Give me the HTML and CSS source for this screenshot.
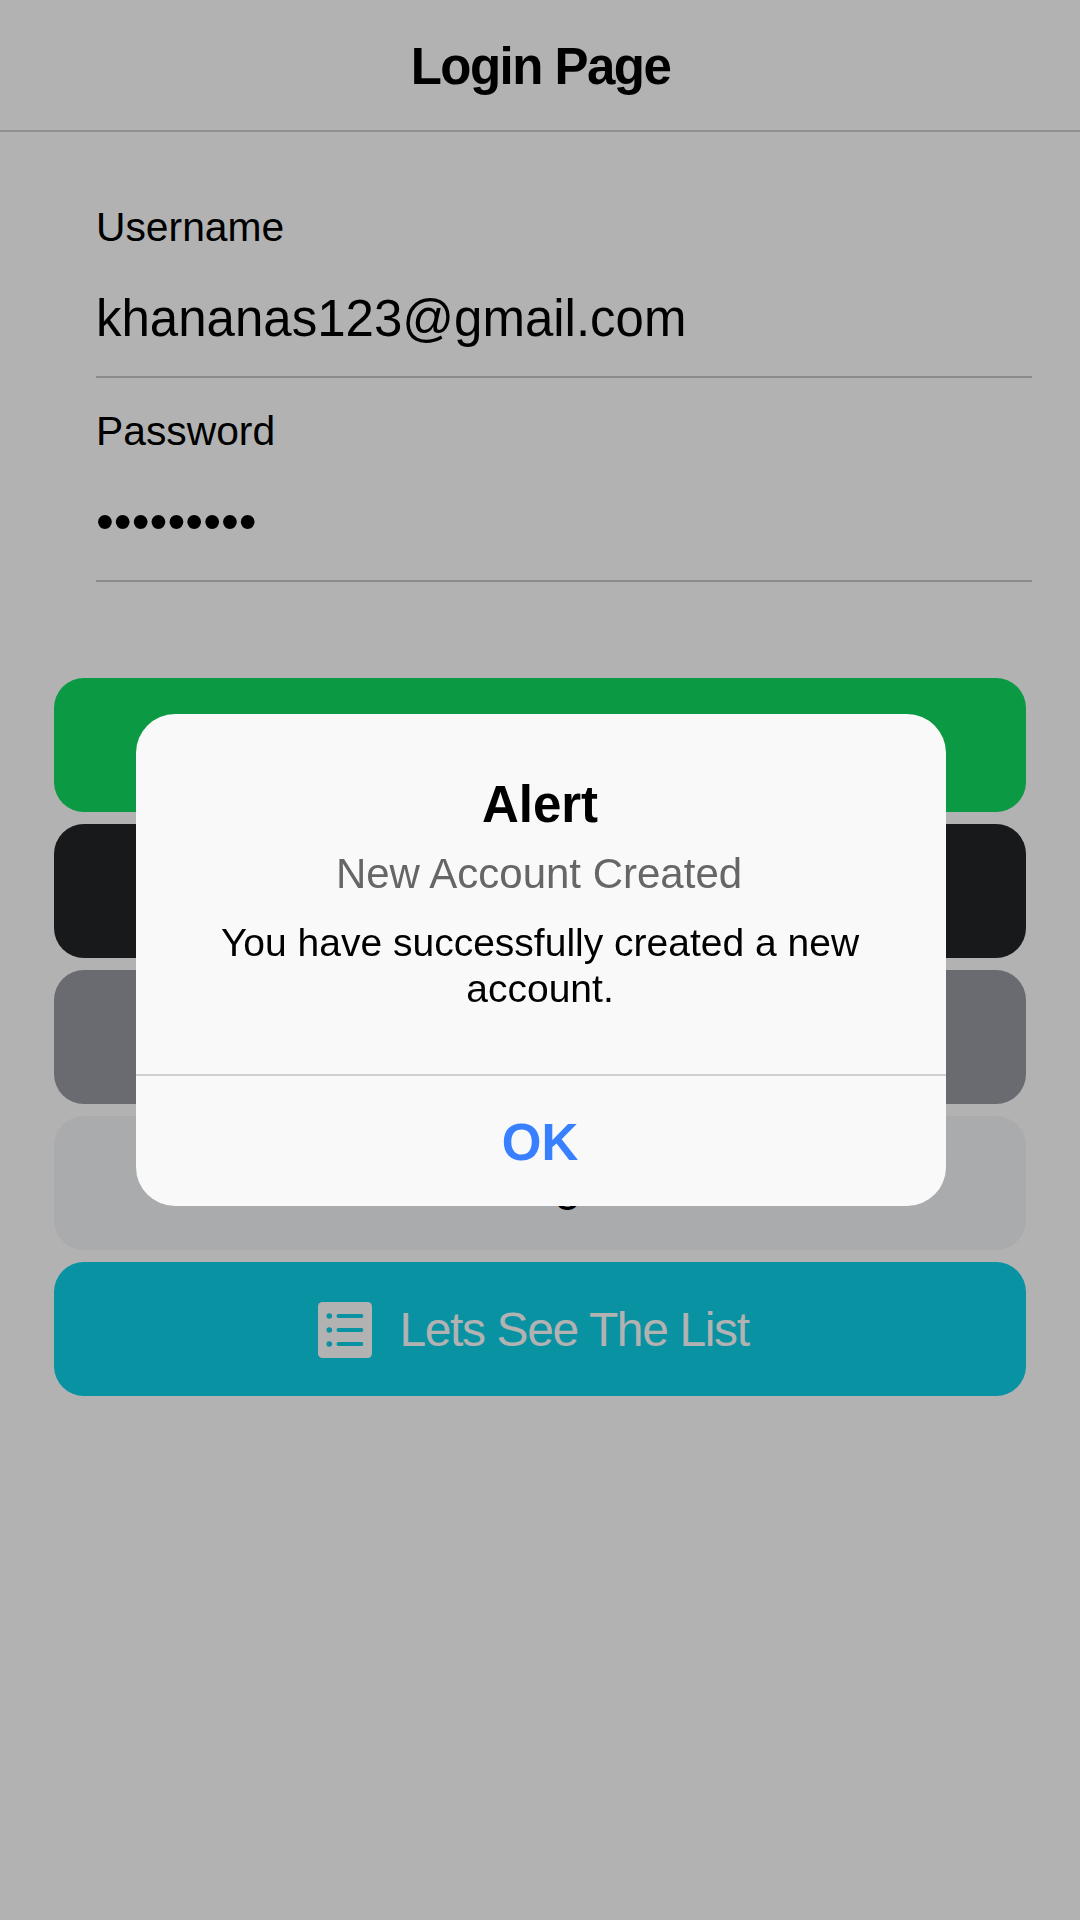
FILE: index.html
```html
<!DOCTYPE html>
<html lang="en">
<head>
<meta charset="utf-8">
<title>Login Page</title>
<link rel="stylesheet" href="styles.css">
</head>
<body>
<main class="page">
  <header class="toolbar"><h1 class="toolbar-title">Login Page</h1></header>
  <form class="fields">
    <label class="field"><span class="field-label">Username</span><input class="field-input" type="text" value="khananas123@gmail.com"></label>
    <label class="field"><span class="field-label">Password</span><input class="field-input password-input" type="password" value="password1"></label>
  </form>
  <div class="actions">
    <div class="button success"></div>
    <div class="button dark"></div>
    <div class="button medium"></div>
    <div class="button light"><span class="logout-label">Log Out</span></div>
    <div class="button secondary">
      <svg class="list-icon" viewBox="0 0 54 56" aria-hidden="true">
        <rect width="54" height="56" rx="4.5" fill="#fff"/>
        <g fill="#0cd1e8"><circle cx="11.3" cy="14" r="2.8"/><circle cx="11.3" cy="28" r="2.8"/><circle cx="11.3" cy="42" r="2.8"/></g>
        <path d="M20.4 14h23M20.4 28h23M20.4 42h23" stroke="#0cd1e8" stroke-width="3.8" stroke-linecap="round"/>
      </svg>
      <span>Lets See The List</span>
    </div>
  </div>
</main>
<div class="backdrop">
  <section class="alert" role="alertdialog">
    <div class="alert-body">
      <h2 class="alert-title">Alert</h2>
      <h3 class="alert-subtitle">New Account Created</h3>
      <p class="alert-message">You have successfully created a new account.</p>
    </div>
    <button class="alert-button">OK</button>
  </section>
</div>
</body>
</html>
```
FILE: styles.css
```css
* { box-sizing: border-box; }
body { margin: 0; background: #fff; color: #000; font-family: "Liberation Sans", Arial, sans-serif; }
h1, h2, h3, p { margin: 0; font-weight: 400; }
.page { height: 1920px; overflow: hidden; }
.toolbar { height: 132px; padding: 4px 0 0 1px; display: flex; align-items: center; justify-content: center; border-bottom: 2px solid #cecece; }
.toolbar-title { font-size: 51px; font-weight: 700; letter-spacing: -1.53px; line-height: 60px; }
.fields { padding: 42px 48px 0 96px; }
.field { display: block; height: 204px; padding-top: 29px; border-bottom: 2px solid #c8c7cc; }
.field-label { display: block; font-size: 40.8px; line-height: 48px; }
.field-input { display: block; width: 100%; height: 60px; margin-top: 38px; padding: 0; border: 0; outline: 0; background: transparent; color: #000; font: 51px/60px "Liberation Sans", Arial, sans-serif; }
.password-input { margin-top: 37px; }
.actions { display: flex; flex-direction: column; gap: 12px; padding: 96px 54px 0; }
.button { height: 134px; border-radius: 30px; display: flex; align-items: center; justify-content: center; gap: 27px; font-size: 48px; letter-spacing: -1.38px; }
.success { background: #10dc60; }
.dark { background: #222428; }
.medium { background: #989aa2; }
.light { background: #f4f5f8; }
.secondary { background: #0cd1e8; color: #fff; padding-right: 13px; }
.logout-label { padding-left: 89px; }
.list-icon { width: 54px; height: 56px; margin-top: 2px; }
.backdrop { position: fixed; inset: 0; display: flex; align-items: center; justify-content: center; padding-left: 2px; background: rgba(0, 0, 0, .3); }
.alert { width: 810px; height: 492px; border-radius: 39px; overflow: hidden; background: #f9f9f9; text-align: center; }
.alert-body { height: 360px; padding: 61px 50px 0 48px; }
.alert-title { font-size: 51px; font-weight: 700; line-height: 60px; }
.alert-subtitle { margin-top: 15px; padding-right: 2px; font-size: 42px; line-height: 48px; color: #666; }
.alert-message { margin-top: 22px; font-size: 39px; line-height: 46px; }
.alert-button { display: block; width: 100%; height: 132px; padding: 3px 2px 0 0; border: 0; border-top: 2px solid #cfcfcf; background: transparent; color: #3880ff; font: 700 51px/60px "Liberation Sans", Arial, sans-serif; }
```
